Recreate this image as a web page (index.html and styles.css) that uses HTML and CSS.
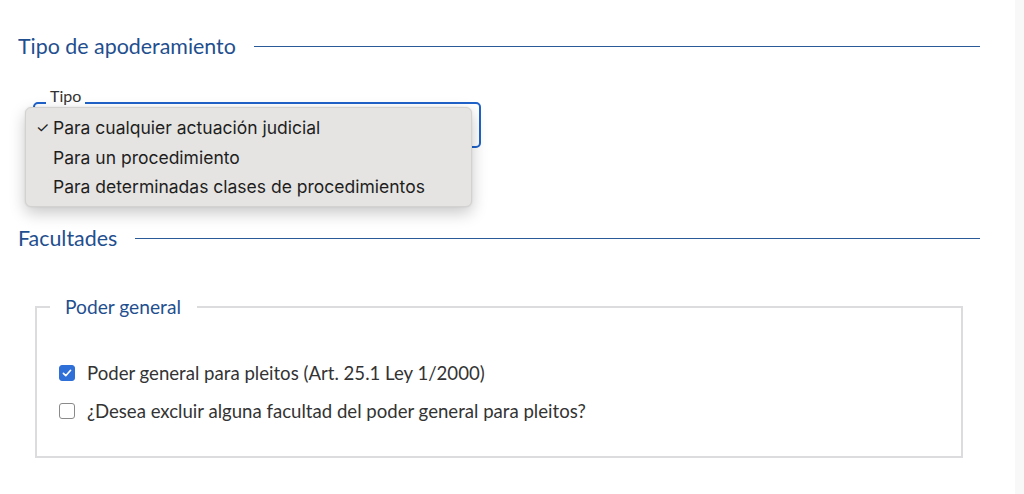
FILE: index.html
```html
<!DOCTYPE html>
<html lang="es">
<head>
<meta charset="utf-8">
<link rel="stylesheet" href="styles.css">
</head>
<body>
<div class="page">
  <main class="main">
    <div class="section-title first">
      <h2>Tipo de apoderamiento</h2>
      <span class="rule"></span>
    </div>

    <div class="field">
      <div class="select-box">
        <span class="field-label">Tipo</span>
      </div>
      <ul class="menu">
        <li class="option selected"><span class="tick">✓</span>Para cualquier actuación judicial</li>
        <li class="option"><span class="tick"></span>Para un procedimiento</li>
        <li class="option"><span class="tick"></span>Para determinadas clases de procedimientos</li>
      </ul>
    </div>

    <div class="section-title second">
      <h2>Facultades</h2>
      <span class="rule"></span>
    </div>

    <fieldset class="group">
      <legend>Poder general</legend>
      <label class="check-row">
        <span class="box checked">
          <svg viewBox="0 0 16 16" width="12" height="12"><path d="M3.2 8.4 L6.4 11.6 L12.8 4.4" fill="none" stroke="#fff" stroke-width="2.2" stroke-linecap="round" stroke-linejoin="round"/></svg>
        </span>
        <span class="check-text">Poder general para pleitos (Art. 25.1 Ley 1/2000)</span>
      </label>
      <label class="check-row">
        <span class="box"></span>
        <span class="check-text">¿Desea excluir alguna facultad del poder general para pleitos?</span>
      </label>
    </fieldset>
  </main>
  <div class="gutter"></div>
</div>
</body>
</html>
```

FILE: styles.css
```css
html, body {
  margin: 0;
  padding: 0;
  height: 100%;
  background: #ffffff;
}

body {
  font-family: "Lato", "Liberation Sans", sans-serif;
  color: #333333;
}

.page {
  display: flex;
  height: 494px;
  overflow: hidden;
}

.main {
  flex: 1;
  padding: 0 35px 0 18px;
}

.gutter {
  width: 9px;
  background: #f8f8f8;
}

.section-title {
  display: flex;
  align-items: center;
  gap: 18px;
  height: 24px;
}

.section-title.first {
  margin-top: 34px;
}

.section-title.second {
  margin-top: 78px;
}

.section-title h2 {
  margin: 0;
  font-size: 21.4px;
  font-weight: 400;
  line-height: 24px;
  color: #1f4f8f;
  white-space: nowrap;
}

.rule {
  flex: 1;
  height: 0;
  border-top: 1.5px solid #2b5a99;
}

.field {
  position: relative;
  margin-top: 44px;
  margin-left: 15px;
  width: 448px;
}

.select-box {
  position: relative;
  height: 42px;
  border: 2px solid #1f62c9;
  border-radius: 5px;
}

.field-label {
  position: absolute;
  left: 11px;
  top: -17px;
  padding: 0 4px;
  background: #fff;
  font-size: 16px;
  line-height: 18px;
  color: #333;
}

.menu {
  position: absolute;
  left: -8px;
  top: 5px;
  width: 445px;
  margin: 0;
  padding: 5px 0 4px;
  list-style: none;
  background: #e5e4e2;
  border: 1px solid #d3d2d0;
  border-radius: 6px;
  box-shadow: 0 6px 16px rgba(0, 0, 0, 0.22), 0 0 2px rgba(0, 0, 0, 0.1);
  font-family: "Inter", "Liberation Sans", sans-serif;
  font-size: 17.5px;
  color: #1e1e1e;
  z-index: 5;
}

.option {
  display: flex;
  align-items: center;
  height: 29.5px;
  padding-left: 10px;
}

.tick {
  width: 17px;
  font-size: 15px;
  color: #1e1e1e;
}

.group {
  margin: 47px 17px 0 17px;
  padding: 44px 22px 20px;
  border: 2px solid #dcdcdf;
  height: 161px;
  box-sizing: border-box;
}

.group legend {
  margin-left: -9px;
  padding: 0 16px 0 15px;
  font-size: 19.2px;
  line-height: 20px;
  color: #1f4f8f;
}

.check-row {
  display: flex;
  align-items: center;
  gap: 12px;
  height: 24px;
  margin-bottom: 14px;
  font-size: 18.6px;
  color: #333;
}

.box {
  width: 14px;
  height: 14px;
  border: 1px solid #8a8a8a;
  border-radius: 3px;
  background: #fff;
  display: flex;
  align-items: center;
  justify-content: center;
  flex: none;
}

.box.checked {
  background: #2f6fd8;
  border-color: #2f6fd8;
}

.box svg {
  display: block;
}
```
